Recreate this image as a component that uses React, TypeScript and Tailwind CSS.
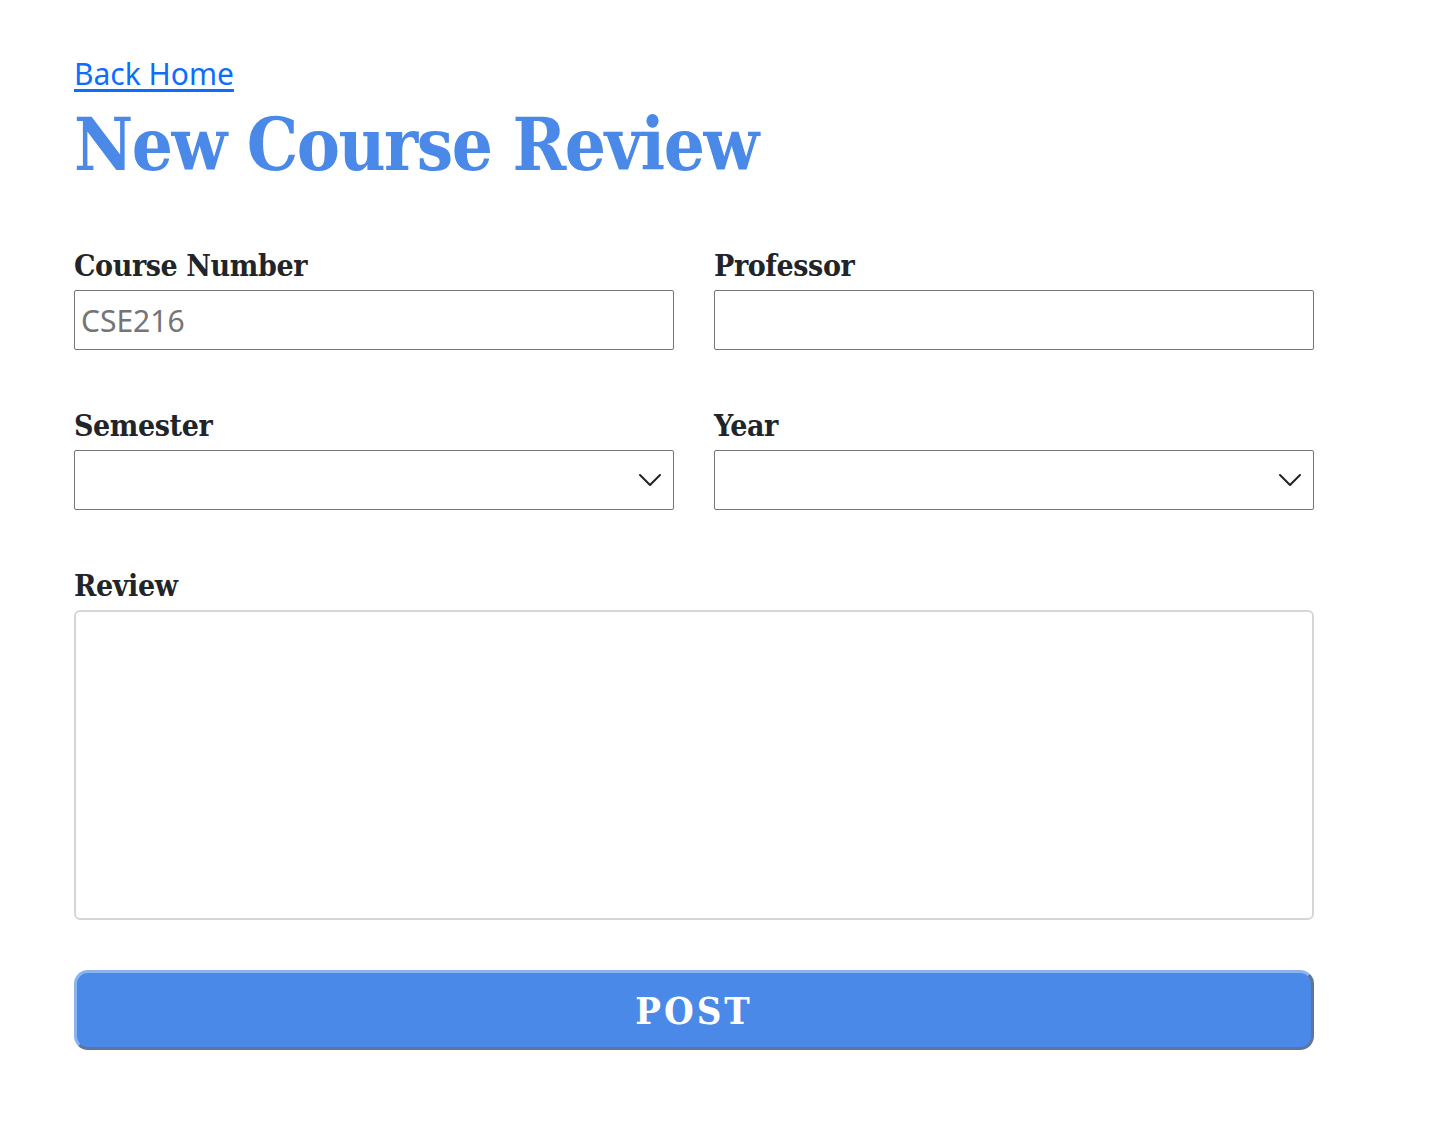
import { ChevronDown } from 'lucide-react';

const slab = { fontFamily: '"DejaVu Serif", "Liberation Serif", serif' };
const sans = { fontFamily: '"Noto Sans", "Open Sans", sans-serif' };

function Label({ children }: { children: string }) {
  return (
    <label className="block h-[46px] text-[30px] leading-[44px] font-bold font-stretch-condensed tracking-[-0.4px] text-[#212529]" style={slab}>
      {children}
    </label>
  );
}

function SelectBox() {
  return (
    <div className="relative h-[60px]">
      <select className="w-full h-full appearance-none bg-white border border-[#767676] rounded-[2px] px-2 text-[30px]" style={sans}>
        <option value=""></option>
      </select>
      <ChevronDown className="absolute right-[4px] top-[10px] w-[40px] h-[40px] text-[#222] pointer-events-none" strokeWidth={1.2} />
    </div>
  );
}

export default function App() {
  return (
    <div className="min-h-screen bg-white pl-[74px] pt-[52px]">
      {/* Back link */}
      <a href="#" className="block w-fit text-[30px] leading-[44px] text-[#0d6efd] underline underline-offset-[4px]" style={sans}>
        Back Home
      </a>

      {/* Title */}
      <h1 className="mt-[4px] text-[72px] leading-[90px] font-bold font-stretch-condensed tracking-[-1.5px] text-[#4a89e8]" style={slab}>
        New Course Review
      </h1>

      {/* Form */}
      <form className="w-[1240px] mt-[54px]" onSubmit={(e) => e.preventDefault()}>
        <div className="grid grid-cols-2 gap-x-10 gap-y-[54px]">
          <div>
            <Label>Course Number</Label>
            <input
              placeholder="CSE216"
              className="w-full h-[60px] border border-[#767676] rounded-[2px] px-[6px] text-[30px] placeholder:text-[#757575] outline-none"
              style={sans}
            />
          </div>
          <div>
            <Label>Professor</Label>
            <input
              className="w-full h-[60px] border border-[#767676] rounded-[2px] px-[6px] text-[30px] outline-none"
              style={sans}
            />
          </div>
          <div>
            <Label>Semester</Label>
            <SelectBox />
          </div>
          <div>
            <Label>Year</Label>
            <SelectBox />
          </div>
        </div>

        <div className="mt-[54px]">
          <Label>Review</Label>
          <textarea className="block w-full h-[310px] border-2 border-[#d4d6d9] rounded-[6px] resize-none outline-none p-2" />
        </div>

        <button
          type="submit"
          className="mt-[50px] w-full h-[80px] rounded-[14px] border-[3px] border-t-[#8ab4f0] border-l-[#8ab4f0] border-b-[#5e769b] border-r-[#5e769b] bg-[#4a89e8] text-white text-[38px] font-bold font-stretch-condensed tracking-[3px]"
          style={slab}
        >
          POST
        </button>
      </form>
    </div>
  );
}
